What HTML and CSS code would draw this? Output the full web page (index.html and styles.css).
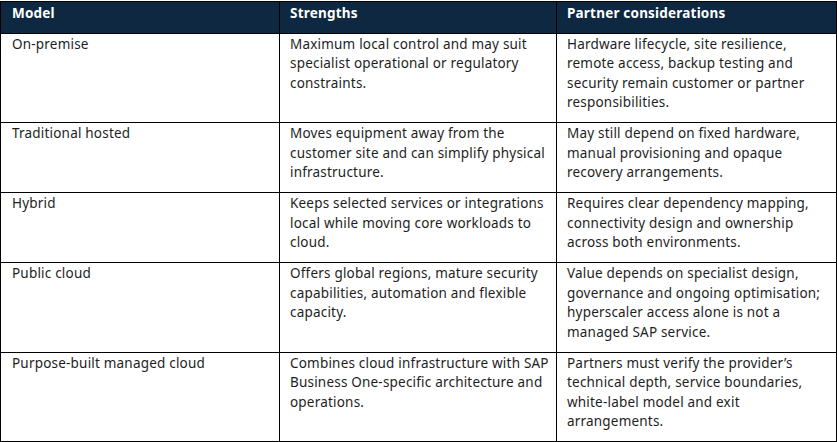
FILE: index.html
```html
<!DOCTYPE html>
<html>
<head>
<meta charset="utf-8">
<link rel="stylesheet" href="styles.css">
</head>
<body>
<table class="grid">
  <colgroup>
    <col class="c1"><col class="c2"><col class="c3">
  </colgroup>
  <thead>
    <tr><th>Model</th><th>Strengths</th><th>Partner considerations</th></tr>
  </thead>
  <tbody>
    <tr class="r4">
      <td>On-premise</td>
      <td>Maximum local control and may suit<br>specialist operational or regulatory<br>constraints.</td>
      <td>Hardware lifecycle, site resilience,<br>remote access, backup testing and<br>security remain customer or partner<br>responsibilities.</td>
    </tr>
    <tr>
      <td>Traditional hosted</td>
      <td>Moves equipment away from the<br>customer site and can simplify physical<br>infrastructure.</td>
      <td>May still depend on fixed hardware,<br>manual provisioning and opaque<br>recovery arrangements.</td>
    </tr>
    <tr>
      <td>Hybrid</td>
      <td>Keeps selected services or integrations<br>local while moving core workloads to<br>cloud.</td>
      <td>Requires clear dependency mapping,<br>connectivity design and ownership<br>across both environments.</td>
    </tr>
    <tr>
      <td>Public cloud</td>
      <td>Offers global regions, mature security<br>capabilities, automation and flexible<br>capacity.</td>
      <td>Value depends on specialist design,<br>governance and ongoing optimisation;<br>hyperscaler access alone is not a<br>managed SAP service.</td>
    </tr>
    <tr>
      <td>Purpose-built managed cloud</td>
      <td>Combines cloud infrastructure with SAP<br>Business One-specific architecture and<br>operations.</td>
      <td>Partners must verify the provider’s<br>technical depth, service boundaries,<br>white-label model and exit<br>arrangements.</td>
    </tr>
  </tbody>
</table>
</body>
</html>
```
FILE: styles.css
```css
html, body {
  margin: 0;
  padding: 0;
  background: #ffffff;
}
body {
  padding: 0;
  font-family: "Noto Sans", "Liberation Sans", sans-serif;
  font-size: 13.5px;
  letter-spacing: 0.2px;
  color: #1e1e1e;
}
.grid {
  border-collapse: collapse;
  table-layout: fixed;
  width: 836px;
  margin-top: 1px;
}
.c1 { width: 279px; }
.c2 { width: 277px; }
.c3 { width: 280px; }
.grid th, .grid td {
  border: 1px solid #000;
  text-align: left;
  vertical-align: top;
  white-space: nowrap;
  line-height: 19.5px;
  padding: 1px 8px 9.5px 10px;
}
.grid th:first-child, .grid td:first-child {
  padding-left: 11px;
}
.grid th {
  background: #0e2841;
  color: #ffffff;
  font-weight: 700;
  padding-top: 2px;
  padding-bottom: 9px;
}
```
